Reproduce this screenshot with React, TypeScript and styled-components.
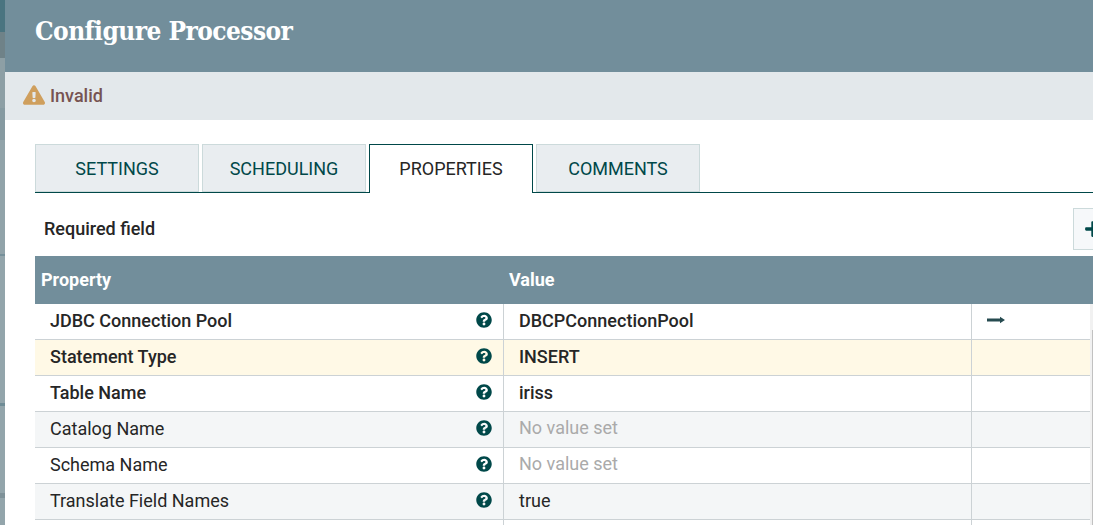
import React from "react";
import styled, { createGlobalStyle } from "styled-components";
import { FaExclamationTriangle, FaPlus, FaQuestionCircle } from "react-icons/fa";

const GlobalStyle = createGlobalStyle`
  html, body {
    margin: 0;
    padding: 0;
    height: 525px;
    overflow: hidden;
    background: #fff;
  }
  * {
    box-sizing: border-box;
  }
`;

const Page = styled.div`
  display: flex;
  width: 1093px;
  height: 525px;
  overflow: hidden;
  font-family: Roboto, "Liberation Sans", sans-serif;
`;

const Backdrop = styled.div`
  flex: 0 0 5px;
  background:
    linear-gradient(
      to bottom,
      #4a7480 0 32px,
      #6f8288 32px 58px,
      #8d9fa5 58px 108px,
      #869aa1 108px 140px,
      #91a3a9 140px 254px,
      #76909a 254px 256px,
      #93a5ab 256px 403px,
      #6f8c96 403px 406px,
      #93a5ab 406px 493px,
      #7f9299 493px 498px,
      #93a5ab 498px
    );
`;

const Dialog = styled.div`
  flex: 1;
  min-width: 0;
  display: flex;
  flex-direction: column;
  background: #fff;
`;

const TitleBar = styled.div`
  height: 72px;
  flex: none;
  display: flex;
  align-items: center;
  padding: 0 0 10px 30px;
  background: #728e9b;
`;

const Title = styled.h1`
  margin: 0;
  font-family: "DejaVu Serif Condensed", "DejaVu Serif", serif;
  font-stretch: condensed;
  font-size: 26px;
  font-weight: 700;
  letter-spacing: -0.55px;
  color: #fff;
`;

const StatusBar = styled.div`
  height: 48px;
  flex: none;
  display: flex;
  align-items: center;
  gap: 5px;
  padding: 0 0 2px 18px;
  background: #e3e8eb;
  color: #775351;
  font-size: 18px;
  font-weight: 500;
`;

const WarnIcon = styled(FaExclamationTriangle)`
  width: 22px;
  height: 20px;
  color: #cf9f5d;
`;

const Content = styled.div`
  padding: 24px 0 0 30px;
`;

const Tabs = styled.div`
  display: flex;
  gap: 3px;
  height: 49px;
  border-bottom: 1px solid #004849;
`;

const Tab = styled.div<{ $active?: boolean }>`
  width: 164px;
  height: ${(p) => (p.$active ? "49px" : "48px")};
  display: flex;
  align-items: center;
  justify-content: center;
  padding-bottom: ${(p) => (p.$active ? "1px" : "0")};
  background: ${(p) => (p.$active ? "#fff" : "#e9edf0")};
  border: 1px solid ${(p) => (p.$active ? "#004849" : "#ccdadb")};
  border-bottom: ${(p) => (p.$active ? "none" : "1px solid #ccdadb")};
  color: ${(p) => (p.$active ? "#262626" : "#004849")};
  font-size: 18px;
  font-weight: 400;
`;

const ToolRow = styled.div`
  height: 63px;
  display: flex;
  align-items: flex-start;
  justify-content: space-between;
  padding-top: 15px;
`;

const RequiredLabel = styled.div`
  padding: 10px 0 0 9px;
  color: #262626;
  font-size: 18px;
  font-weight: 500;
`;

const AddButton = styled.div`
  width: 20px;
  height: 42px;
  display: flex;
  align-items: center;
  overflow: hidden;
  padding-left: 10px;
  background: #f6f8fa;
  border: 1px solid #ccdadb;
  border-right: none;
  color: #004849;
`;

const AddIcon = styled(FaPlus)`
  flex: none;
  width: 18px;
  height: 18px;
`;

const HeaderRow = styled.div`
  height: 48px;
  display: grid;
  grid-template-columns: 469px 1fr;
  align-items: center;
  padding-bottom: 1px;
  background: #728e9b;
  color: #fff;
  font-size: 18px;
  font-weight: 700;
`;

const HeaderCell = styled.div<{ $first?: boolean }>`
  padding-left: ${(p) => (p.$first ? "6px" : "5px")};
`;

const TableBody = styled.div`
  display: flex;
`;

const Rows = styled.div`
  width: 1055px;
`;

const Row = styled.div<{ $tone: "plain" | "stripe" | "warn" }>`
  height: 36px;
  display: grid;
  grid-template-columns: 469px 468px 1fr;
  border-bottom: 1px solid #ccd2d5;
  background: ${(p) =>
    p.$tone === "warn" ? "#fff9e6" : p.$tone === "stripe" ? "#f4f6f7" : "#fff"};
`;

const NameCell = styled.div<{ $required?: boolean }>`
  display: flex;
  align-items: center;
  justify-content: space-between;
  padding: 0 11px 2px 15px;
  border-right: 1px solid #ccd2d5;
  color: #262626;
  font-size: 18px;
  font-weight: ${(p) => (p.$required ? 500 : 400)};
`;

const ValueCell = styled.div<{ $required?: boolean; $unset?: boolean }>`
  display: flex;
  align-items: center;
  padding-left: 15px;
  padding-bottom: ${(p) => (p.$unset ? "5px" : "3px")};
  border-right: 1px solid #ccd2d5;
  color: ${(p) => (p.$unset ? "#aaaaaa" : "#262626")};
  font-size: 18px;
  font-weight: ${(p) => (p.$required ? 500 : 400)};
`;

const ActionCell = styled.div`
  display: flex;
  align-items: center;
  padding-left: 15px;
`;

const HelpIcon = styled(FaQuestionCircle)`
  width: 16px;
  height: 16px;
  margin-top: -1px;
  color: #004849;
`;

const ArrowIcon = styled.svg`
  width: 18px;
  height: 10px;
  margin-top: -3px;
  color: #264b50;
`;

const ScrollTrack = styled.div`
  flex: 0 0 3px;
  height: 221px;
  padding: 26px 0 0 2px;
  background: #f1f1f1;
`;

const ScrollThumb = styled.div`
  width: 1px;
  height: 195px;
  background: #c1c1c1;
`;

type Prop = {
  name: string;
  value?: string;
  required?: boolean;
  tone: "plain" | "stripe" | "warn";
  link?: boolean;
};

const props: Prop[] = [
  { name: "JDBC Connection Pool", value: "DBCPConnectionPool", required: true, tone: "plain", link: true },
  { name: "Statement Type", value: "INSERT", required: true, tone: "warn" },
  { name: "Table Name", value: "iriss", required: true, tone: "plain" },
  { name: "Catalog Name", tone: "stripe" },
  { name: "Schema Name", tone: "plain" },
  { name: "Translate Field Names", value: "true", tone: "stripe" },
];

export default function App() {
  return (
    <>
      <GlobalStyle />
      <Page>
        <Backdrop />
        <Dialog>
          <TitleBar>
            <Title>Configure Processor</Title>
          </TitleBar>
          <StatusBar>
            <WarnIcon />
            Invalid
          </StatusBar>
          <Content>
            <Tabs>
              <Tab>SETTINGS</Tab>
              <Tab>SCHEDULING</Tab>
              <Tab $active>PROPERTIES</Tab>
              <Tab>COMMENTS</Tab>
            </Tabs>
            <ToolRow>
              <RequiredLabel>Required field</RequiredLabel>
              <AddButton>
                <AddIcon />
              </AddButton>
            </ToolRow>
            <HeaderRow>
              <HeaderCell $first>Property</HeaderCell>
              <HeaderCell>Value</HeaderCell>
            </HeaderRow>
            <TableBody>
              <Rows>
                {props.map((p) => (
                  <Row key={p.name} $tone={p.tone}>
                    <NameCell $required={p.required}>
                      {p.name}
                      <HelpIcon />
                    </NameCell>
                    <ValueCell $required={p.required} $unset={!p.value}>
                      {p.value || "No value set"}
                    </ValueCell>
                    <ActionCell>
                      {p.link && (
                        <ArrowIcon viewBox="0 0 18 10">
                          <path d="M0 3.6h13V1.8l5 3.2-5 3.2V6.4H0z" fill="currentColor" />
                        </ArrowIcon>
                      )}
                    </ActionCell>
                  </Row>
                ))}
                <Row $tone="plain">
                  <NameCell />
                  <ValueCell />
                  <ActionCell />
                </Row>
              </Rows>
              <ScrollTrack>
                <ScrollThumb />
              </ScrollTrack>
            </TableBody>
          </Content>
        </Dialog>
      </Page>
    </>
  );
}
